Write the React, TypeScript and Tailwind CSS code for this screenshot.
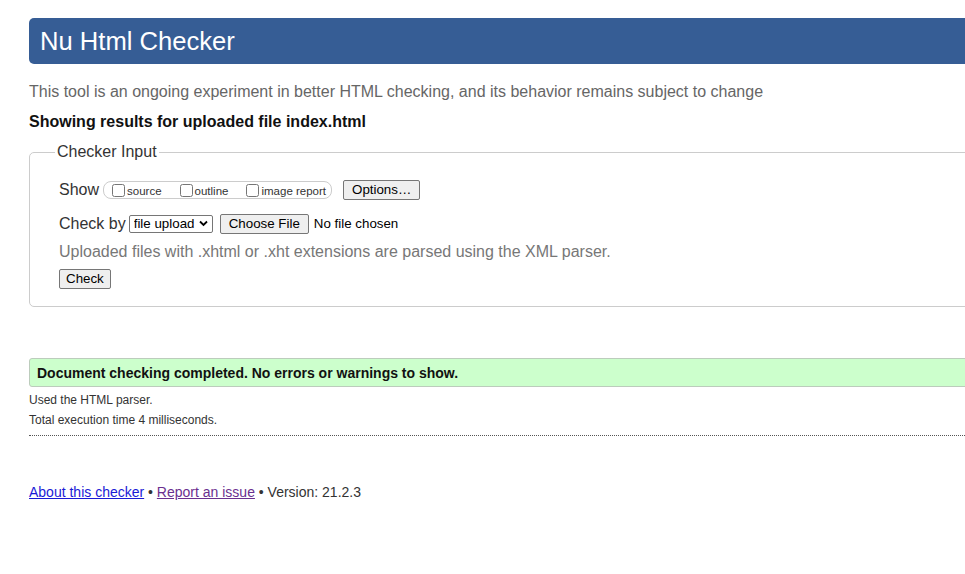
import { useState } from 'react';

export default function App() {
  const [source, setSource] = useState(false);
  const [outline, setOutline] = useState(false);
  const [imageReport, setImageReport] = useState(false);

  return (
    <div
      className="min-h-screen overflow-hidden bg-white text-[#333]"
      style={{ fontFamily: '"Liberation Sans", Arial, sans-serif' }}
    >
      <div className="ml-[29px] w-[1000px]">
        {/* Title bar */}
        <h1 className="mt-[18px] h-[46px] rounded-l-[5px] bg-[#365d95] pl-[11px] text-[25.6px] leading-[46px] text-white">
          Nu Html Checker
        </h1>

        <p className="mt-[18px] text-[16px] leading-[20px] text-[#666]">
          This tool is an ongoing experiment in better HTML checking, and its behavior remains subject to change
        </p>
        <p className="mt-[10px] text-[16px] font-bold leading-[20px] text-[#111]">
          Showing results for uploaded file index.html
        </p>

        {/* Checker input */}
        <fieldset className="mt-[10px] rounded-[5px] border border-[#ccc] px-[29px] pt-[18px] pb-[17px]">
          <legend className="ml-[-4px] px-[2px] text-[16px] leading-[20px] text-[#333]">Checker Input</legend>

          <div className="flex h-[20px] items-center">
            <span className="text-[16px] leading-[20px]">Show</span>
            <span className="ml-[4px] flex h-[18px] items-center rounded-[8px] border border-[#ccc] pr-[5px] pl-[5px] text-[11.5px]">
              <label className="flex items-center">
                <input
                  type="checkbox"
                  className="mr-[2px] ml-[3px] h-[13px] w-[13px]"
                  checked={source}
                  onChange={() => setSource(v => !v)}
                />
                <span className="mt-[3px] leading-[13px]">source</span>
              </label>
              <label className="ml-[18px] flex items-center">
                <input
                  type="checkbox"
                  className="mr-[2px] h-[13px] w-[13px]"
                  checked={outline}
                  onChange={() => setOutline(v => !v)}
                />
                <span className="mt-[3px] leading-[13px]">outline</span>
              </label>
              <label className="ml-[18px] flex items-center">
                <input
                  type="checkbox"
                  className="mr-[2px] h-[13px] w-[13px]"
                  checked={imageReport}
                  onChange={() => setImageReport(v => !v)}
                />
                <span className="mt-[3px] leading-[13px]">image report</span>
              </label>
            </span>
            <button className="ml-[11px] h-[20px] rounded-[2px] border border-[#767676] bg-[#efefef] px-[8px] text-[13.33px] leading-[16px] text-black">
              Options…
            </button>
          </div>

          <div className="mt-[14px] flex h-[20px] items-center">
            <span className="text-[16px] leading-[20px]">Check by</span>
            <span className="relative ml-[3px] flex">
              <select className="h-[18px] w-[84px] appearance-none rounded-[2px] border border-[#767676] bg-white pl-[4px] text-[13.33px] leading-[16px] text-black">
                <option>file upload</option>
                <option>address</option>
                <option>text input</option>
              </select>
              <svg
                className="pointer-events-none absolute top-[5px] right-[5px]"
                width="9"
                height="7"
                viewBox="0 0 9 7"
              >
                <path d="M1 1.5 L4.5 5 L8 1.5" fill="none" stroke="#000" strokeWidth="1.8" />
              </svg>
            </span>
            <button className="ml-[7px] h-[20px] rounded-[2px] border border-[#767676] bg-[#efefef] px-[8px] text-[13.33px] leading-[16px] text-black">
              Choose File
            </button>
            <span className="ml-[5px] text-[13.33px] text-black">No file chosen</span>
          </div>

          <p className="mt-[8px] text-[16px] leading-[20px] text-[#777]">
            Uploaded files with .xhtml or .xht extensions are parsed using the XML parser.
          </p>

          <button className="mt-[7px] block h-[20px] rounded-[2px] border border-[#767676] bg-[#efefef] px-[6px] text-[13.33px] leading-[16px] text-black">
            Check
          </button>
        </fieldset>

        {/* Result */}
        <div className="mt-[51px] h-[29px] rounded-l-[3px] border border-[#bcccbc] bg-[#ccffcc] pl-[7px] text-[14px] leading-[28px] font-bold text-[#111]">
          Document checking completed. No errors or warnings to show.
        </div>
        <p className="mt-[3px] text-[12px] leading-[20px] text-[#333]">Used the HTML parser.</p>
        <p className="text-[12px] leading-[20px] text-[#333]">Total execution time 4 milliseconds.</p>
        <hr className="mt-[5px] border-t border-dotted border-[#555]" />

        {/* Footer */}
        <p className="mt-[46px] text-[14px] leading-[20px] text-[#333]">
          <a href="#about" className="text-[#1a1ad6] underline">About this checker</a>
          {' • '}
          <a href="#issue" className="text-[#6a2f8f] underline">Report an issue</a>
          {' • Version: 21.2.3'}
        </p>
      </div>
    </div>
  );
}
